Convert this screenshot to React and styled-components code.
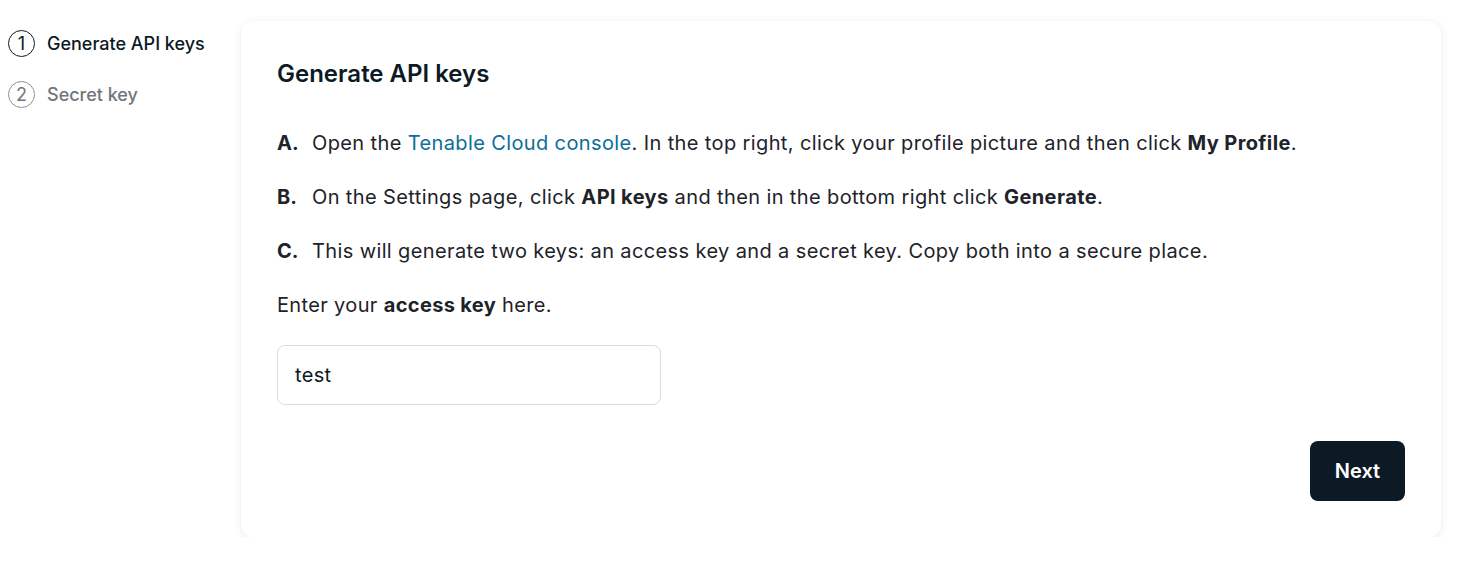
import styled, { createGlobalStyle } from "styled-components";

const GlobalStyle = createGlobalStyle`
  html, body {
    margin: 0;
    background: #fff;
    font-family: Inter, "Noto Sans", sans-serif;
    color: #1d2329;
  }
  * { box-sizing: border-box; }
`;

const Page = styled.div`
  display: flex;
  align-items: flex-start;
  padding: 21px 0 0 8px;
`;

const Steps = styled.ol`
  list-style: none;
  margin: 9px 0 0;
  padding: 0;
  width: 233px;
  display: flex;
  flex-direction: column;
  gap: 24px;
`;

const Step = styled.li`
  display: flex;
  align-items: center;
  gap: 12px;
  font-size: 18px;
  font-weight: 500;
  line-height: 27px;
  color: ${(p) => (p.$active ? "#0b1a24" : "#6f767c")};
`;

const StepNum = styled.span`
  width: 27px;
  height: 27px;
  border-radius: 50%;
  border: 1.5px solid ${(p) => (p.$active ? "#0b1a24" : "#8a9095")};
  display: flex;
  align-items: center;
  justify-content: center;
  font-size: 18px;
  font-weight: 400;
  color: inherit;
`;

const Card = styled.section`
  width: 1200px;
  background: #fff;
  border-radius: 12px;
  box-shadow: 0 2px 10px rgba(0, 0, 0, 0.07), 0 0 2px rgba(0, 0, 0, 0.04);
  padding: 39px 36px 36px;
  display: flex;
  flex-direction: column;
`;

const Title = styled.h2`
  margin: 0;
  font-size: 24px;
  line-height: 28px;
  font-weight: 600;
  color: #0b1a24;
`;

const Instructions = styled.ol`
  list-style: none;
  margin: 41px 0 0;
  padding: 0;
  display: flex;
  flex-direction: column;
  gap: 26px;
`;

const Item = styled.li`
  display: flex;
  font-size: 20px;
  line-height: 28px;
  letter-spacing: 0.38px;
`;

const Letter = styled.span`
  font-weight: 700;
  width: 35px;
  flex: none;
  letter-spacing: 0;
`;

const Link = styled.a`
  color: #0b6e99;
  text-decoration: none;
`;

const Prompt = styled.p`
  margin: 26px 0 0;
  font-size: 20px;
  line-height: 28px;
  letter-spacing: 0.35px;
`;

const Input = styled.input`
  margin-top: 26px;
  width: 384px;
  height: 60px;
  border: 1px solid #dcdcdc;
  border-radius: 8px;
  padding: 0 17px;
  font-family: inherit;
  font-size: 20px;
  letter-spacing: 0.35px;
  color: #0b1a24;
  outline: none;
`;

const Footer = styled.div`
  display: flex;
  justify-content: flex-end;
  margin-top: 36px;
`;

const Button = styled.button`
  width: 95px;
  height: 60px;
  border: none;
  border-radius: 8px;
  background: #0b1a24;
  color: #fff;
  font-family: inherit;
  font-size: 20px;
  font-weight: 600;
  cursor: pointer;
`;

export default function App() {
  return (
    <>
      <GlobalStyle />
      <Page>
        <Steps>
          <Step $active>
            <StepNum $active>1</StepNum>
            Generate API keys
          </Step>
          <Step>
            <StepNum>2</StepNum>
            Secret key
          </Step>
        </Steps>
        <Card>
          <Title>Generate API keys</Title>
          <Instructions>
            <Item>
              <Letter>A.</Letter>
              <span>
                Open the <Link href="#">Tenable Cloud console</Link>. In the top
                right, click your profile picture and then click <b>My Profile</b>.
              </span>
            </Item>
            <Item>
              <Letter>B.</Letter>
              <span>
                On the Settings page, click <b>API keys</b> and then in the
                bottom right click <b>Generate</b>.
              </span>
            </Item>
            <Item>
              <Letter>C.</Letter>
              <span>
                This will generate two keys: an access key and a secret key.
                Copy both into a secure place.
              </span>
            </Item>
          </Instructions>
          <Prompt>
            Enter your <b>access key</b> here.
          </Prompt>
          <Input defaultValue="test" />
          <Footer>
            <Button>Next</Button>
          </Footer>
        </Card>
      </Page>
    </>
  );
}
